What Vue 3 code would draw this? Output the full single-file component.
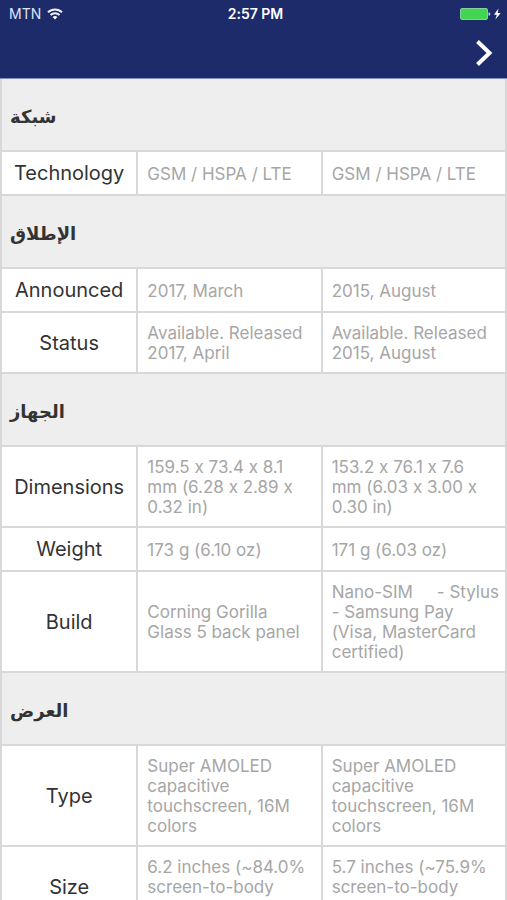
<script setup>
const sections = [
  {
    title: 'شبكة',
    rows: [{ label: 'Technology', values: ['GSM / HSPA / LTE', 'GSM / HSPA / LTE'] }],
  },
  {
    title: 'الإطلاق',
    rows: [
      { label: 'Announced', values: ['2017, March', '2015, August'] },
      {
        label: 'Status',
        values: ['Available. Released\n2017, April', 'Available. Released\n2015, August'],
      },
    ],
  },
  {
    title: 'الجهاز',
    rows: [
      {
        label: 'Dimensions',
        values: [
          '159.5 x 73.4 x 8.1\nmm (6.28 x 2.89 x\n0.32 in)',
          '153.2 x 76.1 x 7.6\nmm (6.03 x 3.00 x\n0.30 in)',
        ],
      },
      { label: 'Weight', values: ['173 g (6.10 oz)', '171 g (6.03 oz)'] },
      {
        label: 'Build',
        values: [
          'Corning Gorilla\nGlass 5 back panel',
          'Nano-SIM     - Stylus\n- Samsung Pay\n(Visa, MasterCard\ncertified)',
        ],
      },
    ],
  },
  {
    title: 'العرض',
    rows: [
      {
        label: 'Type',
        values: [
          'Super AMOLED\ncapacitive\ntouchscreen, 16M\ncolors',
          'Super AMOLED\ncapacitive\ntouchscreen, 16M\ncolors',
        ],
      },
      {
        label: 'Size',
        tall: true,
        values: [
          '6.2 inches (~84.0%\nscreen-to-body',
          '5.7 inches (~75.9%\nscreen-to-body',
        ],
      },
    ],
  },
]
</script>

<template>
  <div class="screen">
    <header class="top">
      <div class="status">
        <span class="carrier">
          MTN
          <svg class="wifi" viewBox="0 0 16 12" aria-hidden="true">
            <path d="M1 4.3a10 10 0 0 1 14 0" />
            <path d="M3.5 7a6.4 6.4 0 0 1 9 0" />
            <path class="dot" d="M8 11.5 5.6 9.1a3.4 3.4 0 0 1 4.8 0z" />
          </svg>
        </span>
        <time class="clock">2:57 PM</time>
        <svg class="battery" viewBox="0 0 42 14" aria-hidden="true">
          <rect x="0.5" y="1.5" width="27" height="11" rx="1.5" fill="#43d551" stroke="#82cfa0" />
          <path d="M28.5 5.5h.8q1 0 1 1.5t-1 1.5h-.8z" fill="#c9d4ee" />
          <path d="M38.5 1.5 34 7.8h2.8L35.3 12.5l5.4-6.6h-3z" fill="#fff" />
        </svg>
      </div>
      <nav class="bar">
        <button class="next" type="button" aria-label="Next">
          <svg viewBox="0 0 18 28" aria-hidden="true"><path d="M2.5 2.5 14.5 14 2.5 25.5" /></svg>
        </button>
      </nav>
    </header>

    <main class="content">
      <table class="specs">
        <colgroup>
          <col class="col-label" />
          <col />
          <col />
        </colgroup>
        <tbody v-for="section in sections" :key="section.title">
          <tr>
            <th class="section" colspan="3" scope="colgroup" lang="ar">{{ section.title }}</th>
          </tr>
          <tr v-for="row in section.rows" :key="row.label" :class="{ tall: row.tall }">
            <th class="label" scope="row">{{ row.label }}</th>
            <td v-for="(value, i) in row.values" :key="i" class="value">{{ value }}</td>
          </tr>
        </tbody>
      </table>
    </main>
  </div>
</template>

<style>
body {
  margin: 0;
  background: #fff;
}
</style>

<style scoped>
.screen {
  display: flex;
  flex-direction: column;
  height: 100vh;
  font-family: Inter, "DejaVu Sans", sans-serif;
  font-variant-ligatures: no-contextual;
}

.top {
  flex: none;
  background: #1d2b6b;
  color: #fff;
  border-bottom: 1px solid #7f92c4;
}

.status {
  display: grid;
  grid-template-columns: 1fr auto 1fr;
  align-items: center;
  height: 27px;
  padding: 0 5px 0 9px;
  font-size: 14px;
  line-height: 27px;
}

.carrier {
  display: flex;
  align-items: center;
  gap: 6px;
  color: #dfe4f5;
}

.wifi {
  width: 16px;
  height: 12px;
  fill: none;
  stroke: #eef1fb;
  stroke-width: 2;
}

.wifi .dot {
  fill: #fff;
  stroke: none;
}

.clock {
  font-weight: 600;
}

.battery {
  justify-self: end;
  width: 42px;
  height: 14px;
}

.bar {
  display: flex;
  justify-content: flex-end;
  align-items: center;
  height: 51px;
  padding: 0 10px;
}

.next {
  display: flex;
  padding: 0 4px;
  border: 0;
  background: none;
}

.next svg {
  width: 18px;
  height: 28px;
  fill: none;
  stroke: #fff;
  stroke-width: 4;
}

.content {
  flex: 1;
  min-height: 0;
  overflow-y: auto;
  scrollbar-width: none;
}

.specs {
  width: 100%;
  table-layout: fixed;
  border-collapse: collapse;
  border: 2px solid #d8d8d8;
  border-top: 0;
}

.col-label {
  width: 27%;
}

.section,
.label,
.value {
  border: 2px solid #d8d8d8;
}

tbody:first-of-type .section {
  border-top: 0;
}

.section {
  height: 67px;
  padding: 4px 8px 0;
  background: #eee;
  color: #333;
  font-size: 18px;
  font-weight: 700;
  line-height: 28px;
  text-align: left;
}

.label {
  padding: 1px 0 0;
  color: #333;
  font-size: 20px;
  font-weight: 400;
  line-height: 41px;
  text-align: center;
}

.value {
  padding: 10px 0 9px 9px;
  color: #a6a6a6;
  font-size: 17px;
  line-height: 20px;
  text-align: left;
  white-space: pre;
}

.tall .value {
  height: 60px;
  vertical-align: top;
}
</style>
